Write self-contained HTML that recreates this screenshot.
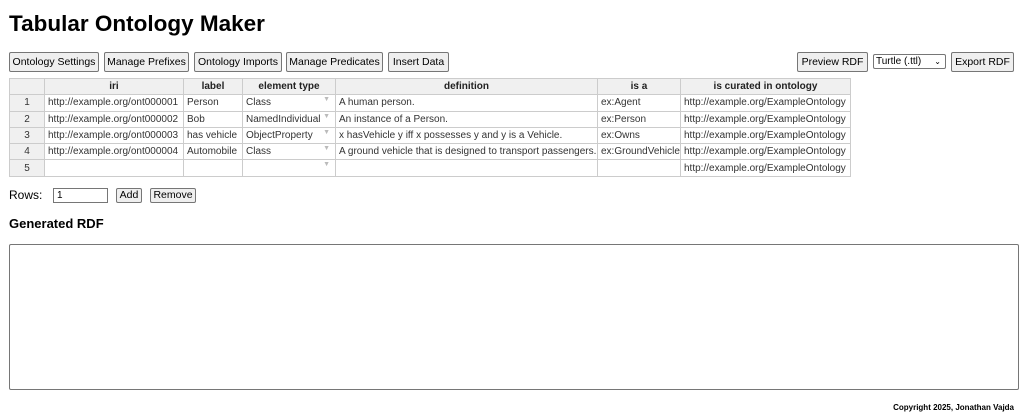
<!DOCTYPE html>
<html><head><meta charset="utf-8"><style>
*{box-sizing:border-box;margin:0;padding:0}
body{width:1022px;height:417px;background:#fff;font-family:"Liberation Sans",Arial,sans-serif;color:#000;position:relative;overflow:hidden}
.a{position:absolute}
h1{position:absolute;left:9px;top:10px;font-size:22.5px;font-weight:bold;line-height:28px}
.btn{position:absolute;top:52px;height:20px;border:1px solid #767676;border-radius:2px;background:#efefef;font-size:10.5px;line-height:18px;text-align:center;white-space:nowrap}
table{position:absolute;left:9px;top:78px;width:841px;border-collapse:collapse;font-family:"Liberation Sans",sans-serif;font-size:10px;table-layout:fixed}
td,th{border:1px solid #ccc;height:16.3px;line-height:15px;vertical-align:middle;padding:0 3px;white-space:nowrap;overflow:hidden;color:#333;position:relative}
th{background:#f0f0f0;font-weight:bold;color:#222;text-align:center}
td.n{background:#f0f0f0;text-align:center}
.dd::after{content:"▼";position:absolute;right:5px;top:1px;font-size:7px;line-height:8px;color:#bbb}
</style></head><body>
<h1>Tabular Ontology Maker</h1>
<div class="btn" style="left:9px;width:90px">Ontology Settings</div>
<div class="btn" style="left:104px;width:85px">Manage Prefixes</div>
<div class="btn" style="left:194px;width:88px">Ontology Imports</div>
<div class="btn" style="left:286px;width:97px">Manage Predicates</div>
<div class="btn" style="left:388px;width:61px">Insert Data</div>
<div class="btn" style="left:797px;width:71px">Preview RDF</div>
<div class="a" style="left:873px;top:54px;width:73px;height:15px;border:1px solid #767676;border-radius:2px;font-size:10px;line-height:13px;padding-left:2px">Turtle (.ttl)<span style="position:absolute;right:4px;top:0;font-size:8px">⌄</span></div>
<div class="btn" style="left:951px;width:63px">Export RDF</div>
<table>
<colgroup><col style="width:35px"><col style="width:139px"><col style="width:59px"><col style="width:93px"><col style="width:262px"><col style="width:83px"><col style="width:170px"></colgroup>
<tr><th></th><th>iri</th><th>label</th><th>element type</th><th>definition</th><th>is a</th><th>is curated in ontology</th></tr>
<tr><td class="n">1</td><td>http://example.org/ont000001</td><td>Person</td><td class="dd">Class</td><td>A human person.</td><td>ex:Agent</td><td>http://example.org/ExampleOntology</td></tr>
<tr><td class="n">2</td><td>http://example.org/ont000002</td><td>Bob</td><td class="dd">NamedIndividual</td><td>An instance of a Person.</td><td>ex:Person</td><td>http://example.org/ExampleOntology</td></tr>
<tr><td class="n">3</td><td>http://example.org/ont000003</td><td>has vehicle</td><td class="dd">ObjectProperty</td><td>x hasVehicle y iff x possesses y and y is a Vehicle.</td><td>ex:Owns</td><td>http://example.org/ExampleOntology</td></tr>
<tr><td class="n">4</td><td>http://example.org/ont000004</td><td>Automobile</td><td class="dd">Class</td><td>A ground vehicle that is designed to transport passengers.</td><td>ex:GroundVehicle</td><td>http://example.org/ExampleOntology</td></tr>
<tr><td class="n">5</td><td></td><td></td><td class="dd"></td><td></td><td></td><td>http://example.org/ExampleOntology</td></tr>
</table>
<div class="a" style="left:9px;top:188px;font-size:12px">Rows:</div>
<div class="a" style="left:53px;top:188px;width:55px;height:15px;border:1px solid #767676;font-size:10px;line-height:13px;padding-left:3px">1</div>
<div class="btn" style="left:116px;top:188px;width:26px;height:15px;line-height:13px">Add</div>
<div class="btn" style="left:150px;top:188px;width:46px;height:15px;line-height:13px">Remove</div>
<div class="a" style="left:9px;top:216px;font-size:13px;font-weight:bold">Generated RDF</div>
<div class="a" style="left:9px;top:244px;width:1010px;height:146px;border:1px solid #767676;border-radius:2px"></div>
<div class="a" style="right:8px;top:403px;font-size:8px;font-weight:bold">Copyright 2025, Jonathan Vajda</div>
</body></html>
